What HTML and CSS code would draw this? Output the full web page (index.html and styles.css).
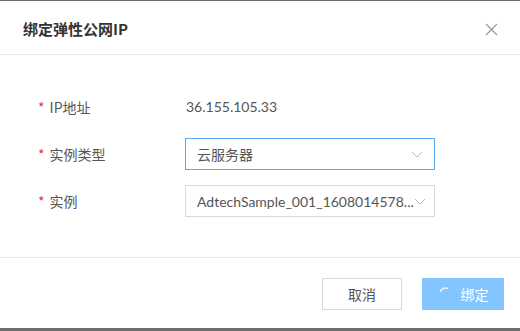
FILE: index.html
```html
<!DOCTYPE html>
<html lang="zh-CN">
<head>
    <meta charset="UTF-8">
    <title>绑定弹性公网IP</title>
    <link rel="stylesheet" href="styles.css">
</head>
<body>
    <div class="dialog">
        <div class="dialog-header">
            <h3 class="dialog-title">绑定弹性公网IP</h3>
            <span class="close">
                <svg width="13" height="13" viewBox="0 0 13 13"><path d="M1 1L12 12M12 1L1 12" stroke="#999" stroke-width="1.2" fill="none"/></svg>
            </span>
        </div>

        <div class="dialog-body">
            <div class="form-row">
                <label class="form-label"><i class="req">*</i>IP地址</label>
                <span class="form-value">36.155.105.33</span>
            </div>
            <div class="form-row">
                <label class="form-label"><i class="req">*</i>实例类型</label>
                <div class="select active">
                    <span class="select-text">云服务器</span>
                    <svg class="arrow" width="12" height="7" viewBox="0 0 12 7"><path d="M1 1L6 6L11 1" stroke="#bbb" stroke-width="1" fill="none"/></svg>
                </div>
            </div>
            <div class="form-row">
                <label class="form-label"><i class="req">*</i>实例</label>
                <div class="select">
                    <span class="select-text">AdtechSample_001_1608014578...</span>
                    <svg class="arrow" width="12" height="7" viewBox="0 0 12 7"><path d="M1 1L6 6L11 1" stroke="#bbb" stroke-width="1" fill="none"/></svg>
                </div>
            </div>
        </div>

        <div class="dialog-footer">
            <button class="btn">取消</button>
            <button class="btn btn-primary loading">
                <svg class="spinner" width="14" height="14" viewBox="0 0 14 14"><path d="M2 6A6 6 0 0 1 10 2.5" stroke="#e6f3ff" stroke-width="1.5" fill="none"/></svg>
                绑定
            </button>
        </div>
    </div>
</body>
</html>
```

FILE: styles.css
```css
* {
    box-sizing: border-box;
}
body {
    margin: 0;
    font-family: Lato, "Noto Sans CJK SC", sans-serif;
    font-size: 14px;
    color: #333;
    background: #fff;
}
.dialog {
    width: 520px;
    height: 331px;
    border-top: 1px solid #6e6e6e;
    border-bottom: 3px solid #6e6e6e;
    display: flex;
    flex-direction: column;
}
.dialog-header {
    height: 54px;
    border-bottom: 1px solid #e6e6e6;
    display: flex;
    align-items: center;
    justify-content: space-between;
    padding: 2px 22px 0 23px;
}
.dialog-title {
    margin: 0;
    font-size: 15px;
    font-weight: bold;
    color: #333;
    font-family: "Noto Sans CJK SC", sans-serif;
}
.close {
    display: flex;
    margin-top: 1px;
}
.dialog-body {
    height: 202px;
    padding: 36px 0 0 38px;
    display: flex;
    flex-direction: column;
    gap: 15px;
}
.form-row {
    display: flex;
    align-items: center;
    height: 32px;
}
.form-label {
    width: 147px;
    color: #555;
    font-family: "Noto Sans CJK SC", sans-serif;
}
.req {
    font-style: normal;
    color: #e4393c;
    margin-right: 5px;
}
.form-value {
    color: #555;
    padding-left: 1px;
    margin-top: -2px;
}
.select {
    width: 250px;
    height: 32px;
    border: 1px solid #d9d9d9;
    display: flex;
    align-items: center;
    justify-content: space-between;
    padding: 0 11px 0 11px;
    color: #555;
}
.select.active {
    border-color: #5aa9f2;
}
.select-text {
    white-space: nowrap;
}
.arrow {
    flex-shrink: 0;
}
.dialog-footer {
    flex: 1;
    border-top: 1px solid #e6e6e6;
    display: flex;
    justify-content: flex-end;
    align-items: flex-start;
    padding: 20px 16px 0 0;
    gap: 20px;
}
.btn {
    height: 32px;
    width: 80px;
    border: 1px solid #d9d9d9;
    background: #fff;
    font-family: "Noto Sans CJK SC", sans-serif;
    font-size: 14px;
    color: #555;
    padding: 0;
    display: flex;
    align-items: center;
    justify-content: center;
}
.btn-primary {
    width: 82px;
    border: none;
    background: #85c5ff;
    color: #fff;
}
.spinner {
    margin-right: 9px;
    margin-top: -3px;
}
```
